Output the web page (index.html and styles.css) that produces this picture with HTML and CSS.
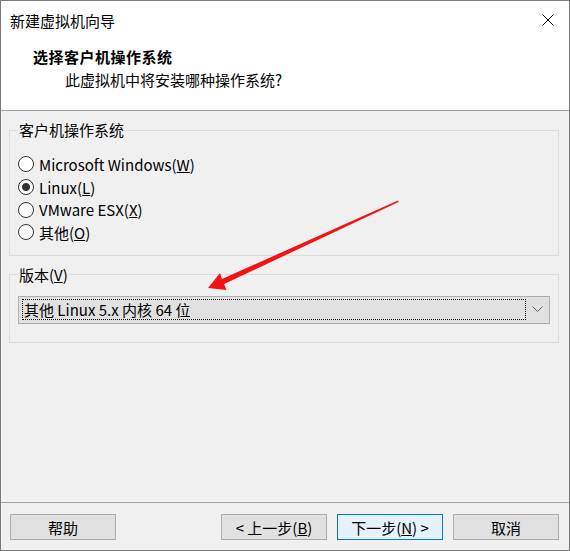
FILE: index.html
```html
<!DOCTYPE html>
<html lang="zh-CN">
<head>
  <meta charset="UTF-8" />
  <title>新建虚拟机向导</title>
  <link rel="stylesheet" href="styles.css">
</head>
<body>
  <div class="window">
    <div class="header">
      <div class="titlebar">
        <span class="title">新建虚拟机向导</span>
        <svg class="close" width="12" height="12" viewBox="0 0 12 12">
          <path d="M0.5 0.5 L11.5 11.5 M11.5 0.5 L0.5 11.5" stroke="#000" stroke-width="1" fill="none" />
        </svg>
      </div>
      <h2>选择客户机操作系统</h2>
      <p class="subtitle">此虚拟机中将安装哪种操作系统?</p>
    </div>

    <div class="content">
      <fieldset class="group os">
        <legend>客户机操作系统</legend>
        <label class="radio"><span class="circle"></span>Microsoft Windows(<u>W</u>)</label>
        <label class="radio"><span class="circle checked"></span>Linux(<u>L</u>)</label>
        <label class="radio"><span class="circle"></span>VMware ESX(<u>X</u>)</label>
        <label class="radio"><span class="circle"></span>其他(<u>O</u>)</label>
      </fieldset>

      <fieldset class="group version">
        <legend>版本(<u>V</u>)</legend>
        <div class="select">
          <div class="select-value">其他 Linux 5.x 内核 64 位</div>
          <div class="select-btn">
            <svg width="11" height="7" viewBox="0 0 11 7">
              <path d="M0.5 0.5 L5.5 5.5 L10.5 0.5" stroke="#606060" stroke-width="1" fill="none" />
            </svg>
          </div>
        </div>
      </fieldset>
    </div>

    <div class="footer">
      <button class="btn help">帮助</button>
      <button class="btn">&lt; 上一步(<u>B</u>)</button>
      <button class="btn primary">下一步(<u>N</u>) &gt;</button>
      <button class="btn">取消</button>
    </div>

    <!-- annotation arrow drawn over the dialog -->
    <svg class="arrow" width="570" height="551" viewBox="0 0 570 551">
      <polygon points="208,288 220,273 221.9,279 398,200.5 398.5,202 224.1,284 226.5,290" fill="#f21414" />
    </svg>
  </div>
</body>
</html>
```

FILE: styles.css
```css
body {
  margin: 0;
  font-family: "Noto Sans CJK SC", sans-serif;
  font-size: 15px;
  color: #000;
}
.window {
  position: relative;
  width: 570px;
  height: 551px;
  box-sizing: border-box;
  border: 1px solid #7a7a7a;
  background: #f0f0f0;
  display: flex;
  flex-direction: column;
}
.header {
  background: #fff;
  height: 109px;
  flex: none;
  border-bottom: 1px solid #a0a0a0;
}
.titlebar {
  height: 38px;
  display: flex;
  align-items: center;
  justify-content: space-between;
  padding: 0 15px 0 9px;
}
.close {
  display: block;
}
h2 {
  margin: 8px 0 0 32px;
  font-size: 15px;
  font-weight: bold;
  line-height: 20px;
  letter-spacing: 0.5px;
}
.subtitle {
  margin: 3px 0 0 64px;
  line-height: 20px;
}
.content {
  height: 391px;
  flex: none;
  box-sizing: border-box;
  padding-top: 9px;
}
.group {
  margin: 0 10px 0 8px;
  padding: 13px 8px 11px;
  border: 1px solid #dcdcdc;
}
.group legend {
  padding: 0 1px;
  line-height: 20px;
}
.version {
  margin-top: 9px;
  padding: 11px 8px 18px;
}
.radio {
  display: flex;
  align-items: center;
  height: 22.7px;
}
.circle {
  width: 16px;
  height: 16px;
  box-sizing: border-box;
  border: 1px solid #333;
  border-radius: 50%;
  background: #fff;
  margin-right: 5px;
}
.circle.checked {
  background: radial-gradient(circle, #333 3.6px, #fff 4.4px);
}
.select {
  height: 28px;
  box-sizing: border-box;
  border: 1px solid #adadad;
  background: #e1e1e1;
  display: flex;
  padding: 2px 0 3px 3px;
}
.select-value {
  flex: 1;
  border: 1px dotted #000;
  padding-left: 1px;
  line-height: 20px;
}
.select-btn {
  width: 23px;
  display: flex;
  align-items: center;
  justify-content: center;
}
.footer {
  flex: 1;
  border-top: 1px solid #a0a0a0;
  display: flex;
  gap: 10px;
  padding: 11px 10px 0 9px;
}
.btn {
  width: 106px;
  height: 26px;
  border: 1px solid #adadad;
  background: #e1e1e1;
  font: inherit;
  color: #000;
  padding: 0;
}
.btn.help {
  margin-right: auto;
}
.btn.primary {
  border-color: #0078d7;
  background: #e5f1fb;
}
.arrow {
  position: absolute;
  left: -1px;
  top: -1px;
  pointer-events: none;
}
```
